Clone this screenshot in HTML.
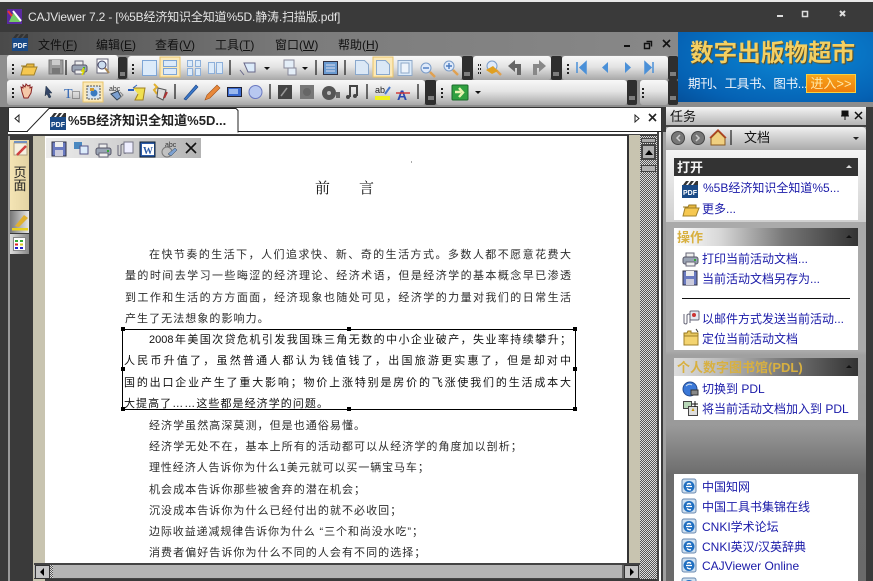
<!DOCTYPE html>
<html><head><meta charset="utf-8"><style>
html,body{margin:0;padding:0}
body{width:873px;height:581px;position:relative;overflow:hidden;background:#3a3a3a;font-family:"Liberation Sans","WenQuanYi Zen Hei","Noto Sans CJK SC",sans-serif}
div{position:absolute;box-sizing:border-box;white-space:nowrap}
.tb{background:linear-gradient(#f8f8f8,#e4e4e4 45%,#a8a8a8);border-radius:3px}
.g{background:#2e2e2e;border-radius:2px}
.m{top:37px;font-size:12px;color:#111;line-height:16px}
.l{font-size:11px;color:#2c2c2c;line-height:14px;height:14px;text-align:justify;text-align-last:justify}
.s{font-size:11px;color:#2c2c2c;line-height:14px;height:14px;letter-spacing:1.06px}
.a{font-size:12px;color:#1a1aa8;line-height:16px;left:702px}
.h{left:674px;width:184px;height:18px;font-size:13px;font-weight:bold;line-height:19px;padding-left:3px}
.w{background:#fff;left:674px;width:184px}
</style></head><body>
<div style="left:0;top:0;width:873px;height:2px;background:#e8e8e8"></div>
<div style="left:28px;top:9px;font-size:12px;letter-spacing:-.15px;line-height:16px;color:#e4e4e4">CAJViewer 7.2 - [%5B经济知识全知道%5D.静涛.扫描版.pdf]</div>
<div style="left:0;top:32px;width:678px;height:23px;background:linear-gradient(90deg,#4a4a4a,#7c7c7c 45%,#888)"></div>
<div class="m" style="left:38px">文件(<u>F</u>)</div><div class="m" style="left:96px">编辑(<u>E</u>)</div><div class="m" style="left:155px">查看(<u>V</u>)</div><div class="m" style="left:215px">工具(<u>T</u>)</div><div class="m" style="left:275px">窗口(<u>W</u>)</div><div class="m" style="left:338px">帮助(<u>H</u>)</div>

<!-- banner -->
<div style="left:678px;top:32px;width:195px;height:70px;background:radial-gradient(ellipse at 60% 30%,#0c8ad8,#0562b4 75%,#05509a)"></div>
<div style="left:690px;top:39px;font-size:23.6px;line-height:30px;font-weight:bold;color:#f3cf62;text-shadow:1px 1px 1px #6a4a10">数字出版物超市</div>
<div style="left:688px;top:76px;font-size:12.5px;letter-spacing:-.3px;line-height:16px;color:#f0f4fa">期刊、工具书、图书...</div>
<div style="left:806px;top:74px;width:50px;height:19px;background:linear-gradient(#f7a51c,#ee7d0a);border:1px solid #f6d040;color:#ffe9a8;font-size:13px;line-height:17px;text-align:center">进入&gt;&gt;</div>
<div style="left:662px;top:102px;width:211px;height:5px;background:#8c8c8c"></div>

<!-- toolbars -->
<div style="left:0;top:55px;width:678px;height:52px;background:#8e8e8e"></div>
<div class="tb" style="left:7px;top:55px;width:111px;height:25px"></div>
<div class="g" style="left:118px;top:57px;width:9px;height:22px"></div>
<div class="tb" style="left:128px;top:56px;width:334px;height:24px"></div>
<div class="g" style="left:462px;top:56px;width:11px;height:24px"></div>
<div class="tb" style="left:473px;top:56px;width:78px;height:24px"></div>
<div class="g" style="left:551px;top:56px;width:11px;height:24px"></div>
<div class="tb" style="left:562px;top:56px;width:106px;height:24px"></div>
<div class="g" style="left:668px;top:56px;width:10px;height:24px"></div>
<div class="tb" style="left:7px;top:80px;width:418px;height:25px"></div>
<div class="g" style="left:425px;top:80px;width:11px;height:25px"></div>
<div class="tb" style="left:436px;top:80px;width:191px;height:25px"></div>
<div class="g" style="left:627px;top:80px;width:10px;height:25px"></div>
<div class="tb" style="left:640px;top:80px;width:28px;height:25px"></div>
<div class="g" style="left:668px;top:80px;width:10px;height:25px"></div>

<!-- tab row -->
<div style="left:8px;top:107px;width:654px;height:25px;background:#fff;border:1px solid #333;border-bottom:1px solid #222"></div>
<div style="left:8px;top:132px;width:654px;height:3px;background:#fff;border-bottom:1px solid #444"></div>

<!-- left / doc -->
<div style="left:8px;top:136px;width:2px;height:445px;background:#9a9a9a"></div>
<div style="left:10px;top:136px;width:23px;height:445px;background:#3a3a3a"></div>
<div style="left:10px;top:140px;width:19px;height:70px;background:linear-gradient(90deg,#f4e4b4,#e4d4a4)"></div>
<div style="left:13px;top:166px;width:14px;font-size:13px;line-height:13px;color:#222;white-space:normal;text-align:center">页<br>面</div>
<div style="left:10px;top:211px;width:19px;height:22px;background:linear-gradient(90deg,#777,#e8e8e8)"></div>
<div style="left:10px;top:234px;width:19px;height:20px;background:linear-gradient(90deg,#ddd,#888)"></div>
<div style="left:33px;top:136px;width:12px;height:445px;background:#c8c4b0"></div>
<div style="left:45px;top:136px;width:582px;height:427px;background:#fff"></div>
<div style="left:46px;top:138px;width:155px;height:20px;background:linear-gradient(90deg,#ededed,#b4b4b4)"></div>
<div style="left:627px;top:135px;width:13px;height:444px;background:#c8c4b0;border-left:2px solid #333"></div>
<div style="left:640px;top:136px;width:17px;height:443px;background:repeating-conic-gradient(#555 0 25%,#ddd 0 50%) 0 0/2px 2px"></div>
<div style="left:657px;top:132px;width:2px;height:449px;background:#444"></div>
<div style="left:659px;top:132px;width:2px;height:449px;background:#fff"></div>
<div style="left:661px;top:132px;width:2px;height:449px;background:#3a3a3a"></div>
<div style="left:663px;top:132px;width:3px;height:449px;background:#a0a0a0"></div>
<div style="left:641px;top:138px;width:15px;height:5px;background:#aaa;border:1px solid #444"></div>
<div style="left:641px;top:144px;width:15px;height:16px;background:#b0b0b0;border:2px solid #444"></div>
<div style="left:641px;top:165px;width:15px;height:7px;background:#b0b0b0;border:1px solid #444"></div>
<div style="left:34px;top:563px;width:606px;height:16px;background:#b4b4b4;border-top:2px solid #444;border-bottom:1px solid #444"></div>
<div style="left:35px;top:565px;width:15px;height:14px;background:#c4c4c4;border:1px solid #333"></div>
<div style="left:50px;top:565px;width:3px;height:13px;background:repeating-conic-gradient(#555 0 25%,#ddd 0 50%) 0 0/2px 2px"></div>
<div style="left:622px;top:565px;width:2px;height:13px;background:#666"></div>
<div style="left:624px;top:565px;width:15px;height:14px;background:#c4c4c4;border:1px solid #333"></div>

<!-- page text -->
<div style="left:315px;top:180px;font-family:'Liberation Serif','Noto Serif CJK SC',serif;font-size:15px;line-height:18px;color:#111">前</div>
<div style="left:359px;top:180px;font-family:'Liberation Serif','Noto Serif CJK SC',serif;font-size:15px;line-height:18px;color:#111">言</div>
<div class="l" style="left:149px;top:248px;width:422px">在快节奏的生活下，人们追求快、新、奇的生活方式。多数人都不愿意花费大</div>
<div class="l" style="left:125px;top:269px;width:446px">量的时间去学习一些晦涩的经济理论、经济术语，但是经济学的基本概念早已渗透</div>
<div class="l" style="left:125px;top:291px;width:446px">到工作和生活的方方面面，经济现象也随处可见，经济学的力量对我们的日常生活</div>
<div class="s" style="left:125px;top:312px">产生了无法想象的影响力。</div>
<div style="left:122px;top:329px;width:454px;height:81px;border:1px solid #000"></div>
<div class="l" style="left:149px;top:333px;width:422px;color:#111">2008年美国次贷危机引发我国珠三角无数的中小企业破产，失业率持续攀升；</div>
<div class="l" style="left:124px;top:354px;width:447px;color:#111">人民币升值了，虽然普通人都认为钱值钱了，出国旅游更实惠了，但是却对中</div>
<div class="l" style="left:124px;top:376px;width:447px;color:#111">国的出口企业产生了重大影响；物价上涨特别是房价的飞涨使我们的生活成本大</div>
<div class="s" style="left:124px;top:397px;color:#111">大提高了……这些都是经济学的问题。</div>
<div class="s" style="left:149px;top:419px">经济学虽然高深莫测，但是也通俗易懂。</div>
<div class="s" style="left:149px;top:440px">经济学无处不在，基本上所有的活动都可以从经济学的角度加以剖析；</div>
<div class="s" style="left:149px;top:461px;letter-spacing:.9px">理性经济人告诉你为什么1美元就可以买一辆宝马车；</div>
<div class="s" style="left:149px;top:483px">机会成本告诉你那些被舍弃的潜在机会；</div>
<div class="s" style="left:149px;top:504px">沉没成本告诉你为什么已经付出的就不必收回；</div>
<div class="s" style="left:149px;top:525px;letter-spacing:.9px">边际收益递减规律告诉你为什么 “三个和尚没水吃”；</div>
<div class="s" style="left:149px;top:546px">消费者偏好告诉你为什么不同的人会有不同的选择；</div>

<!-- right panel -->
<div style="left:666px;top:107px;width:200px;height:474px;background:linear-gradient(180deg,#aaa 0,#aaa 244px,#a0a0a0 248px,#9a9a9a 318px,#6c6c6c 368px,#6a6a6a 474px)"></div>
<div style="left:666px;top:107px;width:200px;height:18px;background:linear-gradient(#f4f4f4,#b4b4b4)"></div>
<div style="left:670px;top:109px;font-size:13px;line-height:16px;color:#111">任务</div>
<div style="left:666px;top:125px;width:200px;height:2px;background:#444"></div>
<div style="left:666px;top:127px;width:200px;height:23px;background:linear-gradient(#f0f0f0,#aaa);border-radius:4px 4px 0 0"></div>
<div style="left:744px;top:130px;font-size:13px;line-height:16px;color:#111">文档</div>
<div style="left:666px;top:150px;width:200px;height:72px;background:linear-gradient(#f4f4f4,#d0d0d0)"></div>

<div class="h" style="top:158px;background:#333;color:#f4f4f4">打开</div>
<div class="w" style="top:176px;height:44px"></div>
<div class="a" style="top:180px;left:703px">%5B经济知识全知道%5...</div>
<div class="a" style="top:201px">更多...</div>

<div class="h" style="top:228px;background:linear-gradient(90deg,#fff,#d8d8d8 25%,#777 60%,#333);color:#d8b040">操作</div>
<div class="w" style="top:246px;height:104px"></div>
<div class="a" style="top:251px">打印当前活动文档...</div>
<div class="a" style="top:271px">当前活动文档另存为...</div>
<div style="left:682px;top:298px;width:168px;height:1px;background:#111"></div>
<div class="a" style="top:311px">以邮件方式发送当前活动...</div>
<div class="a" style="top:331px">定位当前活动文档</div>

<div class="h" style="top:358px;background:linear-gradient(90deg,#ddd,#bbb 25%,#777 60%,#333);color:#d8b040">个人数字图书馆(PDL)</div>
<div class="w" style="top:376px;height:44px"></div>
<div class="a" style="top:381px">切换到 PDL</div>
<div class="a" style="top:401px">将当前活动文档加入到 PDL</div>

<div class="w" style="top:474px;height:107px"></div>
<div class="a" style="top:479px">中国知网</div>
<div class="a" style="top:499px">中国工具书集锦在线</div>
<div class="a" style="top:519px">CNKI学术论坛</div>
<div class="a" style="top:539px">CNKI英汉/汉英辞典</div>
<div class="a" style="top:558px">CAJViewer Online</div>

<!-- icon layer -->
<svg width="873" height="581" viewBox="0 0 873 581" style="position:absolute;left:0;top:0">
<defs>
<pattern id="dots" width="3" height="4" patternUnits="userSpaceOnUse"><rect width="2" height="2" fill="#222"/></pattern>
<g id="pdf"><rect x="0" y="5" width="16" height="13" fill="#1a4a86"/><path d="M1 5l3-4h3l-3 4zM6 5l3-4h3l-3 4zM11 5l3-4h2v4z" fill="#333"/><text x="8" y="15" font-size="7" font-weight="bold" text-anchor="middle" fill="#fff" font-family="Liberation Sans">PDF</text></g>
<g id="ie"><rect x="0" y="1" width="14" height="14" rx="2" fill="#cfe0f0" stroke="#6a8ab0"/><circle cx="7" cy="8.500" r="5.500" fill="#1f6ec0"/><path d="M4 8.500h6M5 6.500q2-2 4 0M5 10.500q2 2 4 1" stroke="#fff" stroke-width="1.300" fill="none"/></g>
<g id="folder"><path d="M1 7h5l1-2h7v3" fill="#e8b840" stroke="#9a7a20"/><path d="M1 16L3 8h14l-3 8z" fill="#f6c850" stroke="#a08028"/></g>
<g id="disk"><path d="M0 0h14v14H0z" fill="#6a7ac0" stroke="#334"/><rect x="3" y="0" width="8" height="5" fill="#eee"/><rect x="3" y="8" width="8" height="6" fill="#ccd"/></g>
<g id="pr"><path d="M3 5V1h8v4" fill="#eee" stroke="#667"/><rect x="0" y="5" width="15" height="7" rx="2" fill="#9aa4b4" stroke="#556"/><rect x="3" y="10" width="9" height="4" fill="#eee" stroke="#667"/><rect x="11" y="7" width="2" height="2" fill="#3a3"/></g>
<g id="pg"><path d="M.5.5h9l4 4v10H.5z" fill="#dbe8f6" stroke="#8aa8cc"/></g>
<g id="mag"><circle cx="6" cy="6" r="5" fill="#dfeafa" stroke="#7a9cc8"/><path d="M10 10l5 5" stroke="#e0a050" stroke-width="2.400"/></g>
</defs>

<!-- app icon -->
<rect x="7" y="9" width="15" height="15" fill="#5a2aa0"/><path d="M9 22l4-9 3 3 5 6z" fill="#7c6"/><path d="M13 11l8 10" stroke="#fff" stroke-width="2"/><path d="M8 11l4 5" stroke="#e33" stroke-width="2"/>
<!-- window buttons -->
<path d="M777 16h6" stroke="#ddd" stroke-width="2"/><rect x="802.500" y="11.500" width="5" height="5" fill="none" stroke="#ddd" stroke-width="1.500"/><path d="M840 11l5 5m0-5l-5 5" stroke="#ddd" stroke-width="2"/>
<use href="#pdf" x="12" y="33"/>
<path d="M624 46h6" stroke="#111" stroke-width="2"/><path d="M644.500 43.500h5v5h-5zM646.500 41.500h5v5" fill="none" stroke="#111" stroke-width="1.400"/><path d="M663 40l7 7m0-7l-7 7" stroke="#111" stroke-width="1.600"/>

<!-- grips -->
<rect x="11" y="62" width="3" height="12" fill="url(#dots)"/><rect x="132" y="62" width="3" height="12" fill="url(#dots)"/><rect x="478" y="62" width="3" height="12" fill="url(#dots)"/><rect x="566" y="62" width="3" height="12" fill="url(#dots)"/><rect x="11" y="86" width="3" height="12" fill="url(#dots)"/><rect x="441" y="86" width="3" height="12" fill="url(#dots)"/><rect x="642" y="86" width="3" height="12" fill="url(#dots)"/>
<path d="M120 73h5M120 75h5M464 73h6M464 75h6M553 73h6M553 75h6M670 73h6M670 75h6M428 97h6M428 99h6M629 97h6M629 99h6M670 97h6M670 99h6" stroke="#ccc"/>

<!-- row 1 -->
<use href="#folder" x="20" y="59"/>
<rect x="49" y="60" width="14" height="14" fill="#9a9a9a" stroke="#777"/><rect x="52" y="60" width="8" height="5" fill="#ccc"/><rect x="52" y="68" width="8" height="6" fill="#777"/>
<path d="M66 60v15" stroke="#333" stroke-width="1.400"/>
<use href="#pr" x="72" y="60"/><path d="M84 68l-2 3h2l-2 4" stroke="#dd0" stroke-width="1.500" fill="none"/>
<rect x="97" y="59" width="11" height="14" fill="#fff" stroke="#667"/><circle cx="102" cy="65" r="4" fill="#cde" stroke="#446"/><path d="M105 68l4 5" stroke="#a85" stroke-width="2"/>
<rect x="142.500" y="60.500" width="14" height="15" fill="#dcebfa" stroke="#7ea6d6"/>
<rect x="160" y="57" width="20" height="20" fill="#fbe9b8" stroke="#e8c468"/><rect x="163.500" y="60.500" width="13" height="6" fill="#dcebfa" stroke="#7ea6d6"/><rect x="163.500" y="68.500" width="13" height="6" fill="#dcebfa" stroke="#7ea6d6"/>
<path d="M187.500 60.500h5v6h-5zM195.500 60.500h5v6h-5zM187.500 68.500h5v7h-5zM195.500 68.500h5v7h-5z" fill="#dcebfa" stroke="#8eb0da"/>
<path d="M208.500 62.500h6v11h-6zM216.500 62.500h6v11h-6z" fill="#dcebfa" stroke="#8eb0da"/>
<path d="M230 60v15" stroke="#333" stroke-width="1.400"/>
<path d="M244 63h11v9h-7zM240 70l4 5" fill="#dcebfa" stroke="#668"/><path d="M264 67l3 3 3-3z" fill="#111"/>
<path d="M284 60h10v8h-10zM288 68h8v7h-8z" fill="#e4eef8" stroke="#889"/><path d="M302 67l3 3 3-3z" fill="#111"/>
<path d="M316 60v15" stroke="#333" stroke-width="1.400"/>
<rect x="323.500" y="61.500" width="14" height="13" fill="#6a9ad0" stroke="#334"/><path d="M326 65h9M326 68h9M326 71h9" stroke="#dde"/>
<path d="M345 60v15" stroke="#333" stroke-width="1.400"/>
<use href="#pg" x="355" y="60"/>
<rect x="373" y="57" width="20" height="20" fill="#fbe9b8" stroke="#e8c468"/><use href="#pg" x="376" y="60"/>
<rect x="398" y="60.500" width="14" height="15" fill="#dcebfa" stroke="#8ea8c8"/><rect x="401" y="63" width="8" height="10" fill="#eef4fb" stroke="#8ea8c8"/>
<use href="#mag" x="420" y="62"/><path d="M423 68h6" stroke="#4a7ac0" stroke-width="1.400"/>
<use href="#mag" x="443" y="60"/><path d="M446 66h6M449 63v6" stroke="#4a7ac0" stroke-width="1.400"/>
<use href="#mag" x="486" y="60"/><path d="M486 70l7-4 5 5-6 3z" fill="#e0a020"/>
<path d="M508 66l7-6v4h6v11h-4v-7h-2v4z" fill="#666"/><path d="M546 66l-7-6v4h-6v11h4v-7h2v4z" fill="#888"/>
<path d="M577 62v11M586 62l-6 5.500 6 5.500z" fill="#4a90d8" stroke="#4a90d8" stroke-width="1.500"/>
<path d="M608 62l-6 5.500 6 5.500z" fill="#4a90d8"/><path d="M625 62l6 5.500-6 5.500z" fill="#4a90d8"/>
<path d="M653 62v11M645 62l6 5.500-6 5.500z" fill="#4a90d8" stroke="#4a90d8" stroke-width="1.500"/>

<!-- row 2 -->
<path d="M22 92l-1-5 2 1 0-3 2 2 1-3 2 2 2-1 0 3 2-1-1 6-3 5h-4z" fill="#f4c8a8" stroke="#822"/>
<path d="M46 86l6 7-3 0 2 4-2 1-2-4-2 2z" fill="#346" stroke="#234" stroke-width=".5"/>
<text x="64" y="98" font-family="Liberation Serif" font-size="14" fill="#3468b4">T</text><rect x="72.500" y="91.500" width="7" height="7" fill="none" stroke="#555" stroke-dasharray="1 1"/>
<rect x="83" y="82" width="20" height="20" fill="#fbe9b8" stroke="#e8c468"/><rect x="87" y="86" width="13" height="13" fill="#d8e4f0" stroke="#555" stroke-dasharray="2 1"/><circle cx="94" cy="93" r="3.500" fill="#3a7ac0"/><rect x="90" y="88" width="4" height="3" fill="#c93"/>
<text x="109" y="91" font-family="Liberation Sans" font-size="7" fill="#333">abc</text><path d="M111 94l7-3 3 6-4 3z" fill="#7ca0d0" stroke="#345"/><path d="M120 92l3 3-3 3" fill="none" stroke="#888"/>
<path d="M133 88h12l-2 12h-8l3-6" fill="#f0e050" stroke="#a08020"/><path d="M128 90h6" stroke="#2a60c0" stroke-width="2"/><path d="M133 88l4-3" stroke="#2a60c0"/>
<path d="M154 84l3 3-3 3 3 4" stroke="#e0b030" fill="none" stroke-width="2"/><path d="M158 88l8 2-3 10-6-3z" fill="#ddd" stroke="#555"/><path d="M167 92l-3 6" stroke="#a33" stroke-width="2"/>
<path d="M175 84v15" stroke="#333" stroke-width="1.400"/>
<path d="M184 99l12-14 2 2-12 13z" fill="#3a78c8" stroke="#1a4488" stroke-width=".6"/>
<path d="M205 100l2-5 10-10 3 3-10 10z" fill="#e8883a" stroke="#a05018" stroke-width=".6"/>
<rect x="227.500" y="87.500" width="14" height="9" fill="#3a6ad0" stroke="#223"/><rect x="229" y="89" width="9" height="5" fill="#9ab8ee"/>
<circle cx="255.500" cy="92" r="6.500" fill="#b8c8f0" stroke="#6a78c0"/>
<path d="M270 84v15" stroke="#333" stroke-width="1.400"/>
<rect x="278" y="85" width="14" height="14" fill="#444"/><path d="M281 96l6-8" stroke="#999" stroke-width="1.500"/>
<rect x="300" y="85" width="14" height="14" fill="#777"/><circle cx="307" cy="92" r="4" fill="#666"/>
<circle cx="329" cy="93" r="7" fill="#555"/><circle cx="329" cy="93" r="2" fill="#bbb"/><rect x="336" y="92" width="4" height="6" fill="#666"/>
<path d="M350 97v-11h7v10M350 86h7" fill="none" stroke="#444" stroke-width="2"/><circle cx="348" cy="97" r="2" fill="#444"/><circle cx="355" cy="96" r="2" fill="#444"/>
<path d="M367 84v15" stroke="#333" stroke-width="1.400"/>
<text x="375" y="93" font-family="Liberation Sans" font-size="9" fill="#222">ab</text><rect x="375" y="96" width="15" height="4" fill="#f0f020"/><path d="M385 94l5-7" stroke="#4a78c8" stroke-width="2"/>
<text x="397" y="100" font-family="Liberation Sans" font-size="14" font-weight="bold" fill="#2a4ab0">A</text><path d="M396 93h14" stroke="#d03030" stroke-width="1.400"/>
<path d="M418 84v15" stroke="#333" stroke-width="1.400"/>
<rect x="452" y="85" width="16" height="15" rx="1" fill="#30a040" stroke="#1a6a2a"/><path d="M455 92h6M459 88l4 4.500-4 4.500" stroke="#e8f4b0" stroke-width="2.400" fill="none"/><path d="M475 91l3 3 3-3z" fill="#111"/>

<!-- tab -->
<path d="M10 131.500h17L49 108.500h187l2 2v22" fill="#fff" stroke="#222"/>
<rect x="28" y="131" width="209" height="3" fill="#fff"/>
<path d="M19 115v7l-4-3.500z" fill="#fff" stroke="#222"/>
<use href="#pdf" x="50" y="112"/>
<path d="M635 115v7l4-3.500z" fill="#fff" stroke="#222"/>
<path d="M649 114l7 7m0-7l-7 7" stroke="#222" stroke-width="1.600"/>

<!-- side tab -->
<rect x="14" y="143" width="13" height="12" fill="#f4f0e0" stroke="#b0a080"/><path d="M17 155l9-9" stroke="#d04040" stroke-width="2.500"/><path d="M14 142h13" stroke="#7090c0" stroke-width="2"/>
<path d="M15 226l9-11 4 3-9 9z" fill="#e0b030"/><rect x="12" y="228" width="16" height="2.500" fill="#e8d020"/>
<rect x="13.500" y="237.500" width="12" height="13" fill="#fff" stroke="#888"/><path d="M15 241h3M20 241h3" stroke="#3a3" stroke-width="2"/><path d="M15 244.500h3" stroke="#d22" stroke-width="2"/><path d="M20 244.500h3" stroke="#dc2" stroke-width="2"/><path d="M15 248h3M20 248h3" stroke="#22c" stroke-width="2"/>

<!-- page toolbar -->
<use href="#disk" x="52" y="142"/>
<rect x="74" y="142" width="8" height="7" fill="#4a88c0"/><rect x="80" y="146" width="8" height="8" fill="#dcebfa" stroke="#558"/>
<use href="#pr" x="96" y="143"/>
<path d="M118 145v10q3 2 3-2v-8q2-2 4 0v9" fill="none" stroke="#667"/><rect x="124" y="142" width="9" height="11" fill="#eef" stroke="#778"/>
<rect x="140" y="142" width="15" height="15" fill="#2a5aa8" stroke="#123"/><rect x="142" y="144" width="12" height="11" fill="#fff"/><text x="148" y="154" font-family="Liberation Serif" font-size="10" font-weight="bold" text-anchor="middle" fill="#2a5aa8">W</text>
<text x="165" y="147" font-family="Liberation Sans" font-size="7" fill="#333">abc</text><circle cx="167" cy="152" r="5" fill="none" stroke="#777"/><path d="M168 154l7-6 2 2-6 6z" fill="#7ca0d0" stroke="#345" stroke-width=".5"/>
<path d="M186 143l10 10m0-10l-10 10" stroke="#111" stroke-width="1.600"/>

<!-- doc markers -->
<path d="M411 162h1" stroke="#555"/>
<path d="M121 327h4v4h-4zM347 327h4v4h-4zM573 327h4v4h-4zM121 367h4v4h-4zM573 367h4v4h-4zM121 407h4v4h-4zM347 407h4v4h-4zM573 407h4v4h-4z" fill="#000"/>

<!-- scroll arrows -->
<path d="M645 155l4-5 4 5z" fill="#000"/>
<path d="M44 568v8l-4-4z" fill="#000"/>
<path d="M630 568v8l4-4z" fill="#000"/>

<!-- right panel icons -->
<path d="M842 111h6v5h-6zM841 116h8M845 116v4" fill="#111" stroke="#111"/>
<path d="M855 112l7 7m0-7l-7 7" stroke="#111" stroke-width="1.500"/>
<circle cx="678" cy="138" r="6.500" fill="#777" stroke="#444"/><path d="M680 135l-3 3 3 3" fill="none" stroke="#ccc" stroke-width="1.500"/>
<circle cx="698" cy="138" r="6.500" fill="#777" stroke="#444"/><path d="M696 135l3 3-3 3" fill="none" stroke="#ccc" stroke-width="1.500"/>
<path d="M711 138l7-7 7 7v7h-14z" fill="#f0d080" stroke="#8a5a20"/><path d="M710 138l8-8 8 8" fill="none" stroke="#b04020" stroke-width="1.500"/>
<path d="M731 130v15" stroke="#222" stroke-width="1.200"/>
<path d="M853 137l3 3 3-3z" fill="#222"/>
<path d="M846 168l3-3 3 3z" fill="#ddd"/><path d="M846 238l3-3 3 3z" fill="#111"/><path d="M846 368l3-3 3 3z" fill="#111"/>
<use href="#pdf" x="682" y="180"/>
<use href="#folder" x="682" y="200"/>
<use href="#pr" x="683" y="252"/>
<use href="#disk" x="683" y="271"/>
<path d="M684 314v9q2 2 3 0v-8q2-2 3 0v8" fill="none" stroke="#667"/><rect x="690" y="311" width="9" height="9" rx="1" fill="#e4e8f0" stroke="#667"/><circle cx="694" cy="315" r="2" fill="#c33"/>
<path d="M684 336h14v-3l-7 0v-2l-3 0-1 2h-3z" fill="#e8c860" stroke="#9a7a20"/><rect x="684" y="336" width="14" height="9" fill="#f4d470" stroke="#a08028"/><path d="M696 329l2 3" stroke="#333"/>
<circle cx="690" cy="389" r="7" fill="#3a78d8" stroke="#244a90"/><path d="M686 386q3-3 6-1" stroke="#cde" fill="none"/><rect x="691" y="390" width="7" height="5" fill="#888" stroke="#333"/>
<rect x="683.500" y="401.500" width="8" height="7" fill="#b8d8b8" stroke="#444"/><rect x="688.500" y="406.500" width="9" height="9" fill="#ddd" stroke="#444"/><path d="M693 408l1.500 3h-3z" fill="#c90"/><path d="M695 401v6M692 404h6" stroke="#111"/>
<use href="#ie" x="682" y="478"/><use href="#ie" x="682" y="498"/><use href="#ie" x="682" y="518"/><use href="#ie" x="682" y="538"/><use href="#ie" x="682" y="557"/><use href="#ie" x="682" y="577"/>
</svg>
<div style="left:68px;top:113px;font-size:13px;font-weight:bold;line-height:16px;color:#222">%5B经济知识全知道%5D...</div>
</body></html>
